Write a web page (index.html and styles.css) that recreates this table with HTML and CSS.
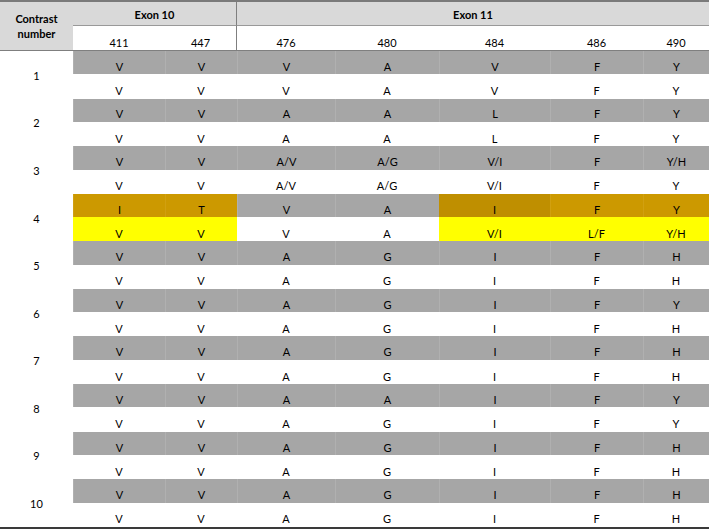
FILE: index.html
```html
<!DOCTYPE html>
<html>
<head>
<meta charset="utf-8">
<link rel="stylesheet" href="styles.css">
</head>
<body>
<div class="table">
  <div class="hd contrast">Contrast<br>number</div>
  <div class="hd exon10">Exon 10</div>
  <div class="hd exon11">Exon 11</div>
  <div class="num">411</div><div class="num sep">447</div><div class="num">476</div><div class="num">480</div><div class="num">484</div><div class="num">486</div><div class="num">490</div>

  <div class="lbl">1</div>
  <div class="c g">V</div><div class="c g">V</div><div class="c g">V</div><div class="c g">A</div><div class="c g">V</div><div class="c g">F</div><div class="c g">Y</div>
  <div class="c w">V</div><div class="c w">V</div><div class="c w">V</div><div class="c w">A</div><div class="c w">V</div><div class="c w">F</div><div class="c w">Y</div>

  <div class="lbl">2</div>
  <div class="c g">V</div><div class="c g">V</div><div class="c g">A</div><div class="c g">A</div><div class="c g">L</div><div class="c g">F</div><div class="c g">Y</div>
  <div class="c w">V</div><div class="c w">V</div><div class="c w">A</div><div class="c w">A</div><div class="c w">L</div><div class="c w">F</div><div class="c w">Y</div>

  <div class="lbl">3</div>
  <div class="c g">V</div><div class="c g">V</div><div class="c g">A/V</div><div class="c g">A/G</div><div class="c g">V/I</div><div class="c g">F</div><div class="c g">Y/H</div>
  <div class="c w">V</div><div class="c w">V</div><div class="c w">A/V</div><div class="c w">A/G</div><div class="c w">V/I</div><div class="c w">F</div><div class="c w">Y</div>

  <div class="lbl">4</div>
  <div class="c o">I</div><div class="c o">T</div><div class="c g">V</div><div class="c g">A</div><div class="c od">I</div><div class="c o">F</div><div class="c o">Y</div>
  <div class="c y">V</div><div class="c y">V</div><div class="c w">V</div><div class="c w">A</div><div class="c y">V/I</div><div class="c y">L/F</div><div class="c y">Y/H</div>

  <div class="lbl">5</div>
  <div class="c g">V</div><div class="c g">V</div><div class="c g">A</div><div class="c g">G</div><div class="c g">I</div><div class="c g">F</div><div class="c g">H</div>
  <div class="c w">V</div><div class="c w">V</div><div class="c w">A</div><div class="c w">G</div><div class="c w">I</div><div class="c w">F</div><div class="c w">H</div>

  <div class="lbl">6</div>
  <div class="c g">V</div><div class="c g">V</div><div class="c g">A</div><div class="c g">G</div><div class="c g">I</div><div class="c g">F</div><div class="c g">Y</div>
  <div class="c w">V</div><div class="c w">V</div><div class="c w">A</div><div class="c w">G</div><div class="c w">I</div><div class="c w">F</div><div class="c w">H</div>

  <div class="lbl">7</div>
  <div class="c g">V</div><div class="c g">V</div><div class="c g">A</div><div class="c g">G</div><div class="c g">I</div><div class="c g">F</div><div class="c g">H</div>
  <div class="c w">V</div><div class="c w">V</div><div class="c w">A</div><div class="c w">G</div><div class="c w">I</div><div class="c w">F</div><div class="c w">H</div>

  <div class="lbl">8</div>
  <div class="c g">V</div><div class="c g">V</div><div class="c g">A</div><div class="c g">A</div><div class="c g">I</div><div class="c g">F</div><div class="c g">Y</div>
  <div class="c w">V</div><div class="c w">V</div><div class="c w">A</div><div class="c w">G</div><div class="c w">I</div><div class="c w">F</div><div class="c w">Y</div>

  <div class="lbl">9</div>
  <div class="c g">V</div><div class="c g">V</div><div class="c g">A</div><div class="c g">G</div><div class="c g">I</div><div class="c g">F</div><div class="c g">H</div>
  <div class="c w">V</div><div class="c w">V</div><div class="c w">A</div><div class="c w">G</div><div class="c w">I</div><div class="c w">F</div><div class="c w">H</div>

  <div class="lbl">10</div>
  <div class="c g">V</div><div class="c g">V</div><div class="c g">A</div><div class="c g">G</div><div class="c g">I</div><div class="c g">F</div><div class="c g">H</div>
  <div class="c w">V</div><div class="c w">V</div><div class="c w">A</div><div class="c w">G</div><div class="c w">I</div><div class="c w">F</div><div class="c w">H</div>
</div>
</body>
</html>
```

FILE: styles.css
```css
html, body {
  margin: 0;
  padding: 0;
  background: #ffffff;
}

.table {
  box-sizing: border-box;
  width: 709px;
  height: 529px;
  display: grid;
  grid-template-columns: 73px 92px 72px 98px 104px 111px 93px 66px;
  grid-template-rows: 24px 25px repeat(10, 23.4px 24.2px);
  border-top: 2px solid #7a7a7a;
  border-bottom: 2px solid #3a3a3a;
  font-family: Lato, "Open Sans", sans-serif;
  font-size: 11px;
  line-height: 13px;
  color: #000000;
}

.table > div {
  box-sizing: border-box;
  display: flex;
  justify-content: center;
}

.hd {
  background: #d9d9d9;
  font-weight: bold;
  align-items: center;
  text-align: center;
}

.contrast {
  grid-row: 1 / 3;
  grid-column: 1;
  border-bottom: 1px solid #7f7f7f;
  line-height: 15px;
  padding-bottom: 1px;
}

.exon10 {
  grid-column: 2 / 4;
  border-bottom: 1px solid #999999;
  border-right: 1px solid #7f7f7f;
  padding-top: 1px;
}

.exon11 {
  grid-column: 4 / 9;
  border-bottom: 1px solid #999999;
  padding-top: 1px;
}

.num {
  align-items: flex-end;
  border-bottom: 1px solid #7f7f7f;
  padding-bottom: 1px;
}

.num.sep {
  border-right: 1px solid #7f7f7f;
}

.lbl {
  grid-column: 1;
  grid-row: span 2;
  align-items: center;
  padding-top: 1px;
}

.c {
  align-items: flex-end;
  padding-bottom: 1.5px;
}

.g {
  background: #a6a6a6;
  border-left: 1px solid #b0b0b0;
}

.w {
  background: #ffffff;
}

.o {
  background: #cc9900;
  border-left: 1px solid #d1a010;
}

.od {
  background: #bf8f00;
}

.y {
  background: #ffff00;
}
```
